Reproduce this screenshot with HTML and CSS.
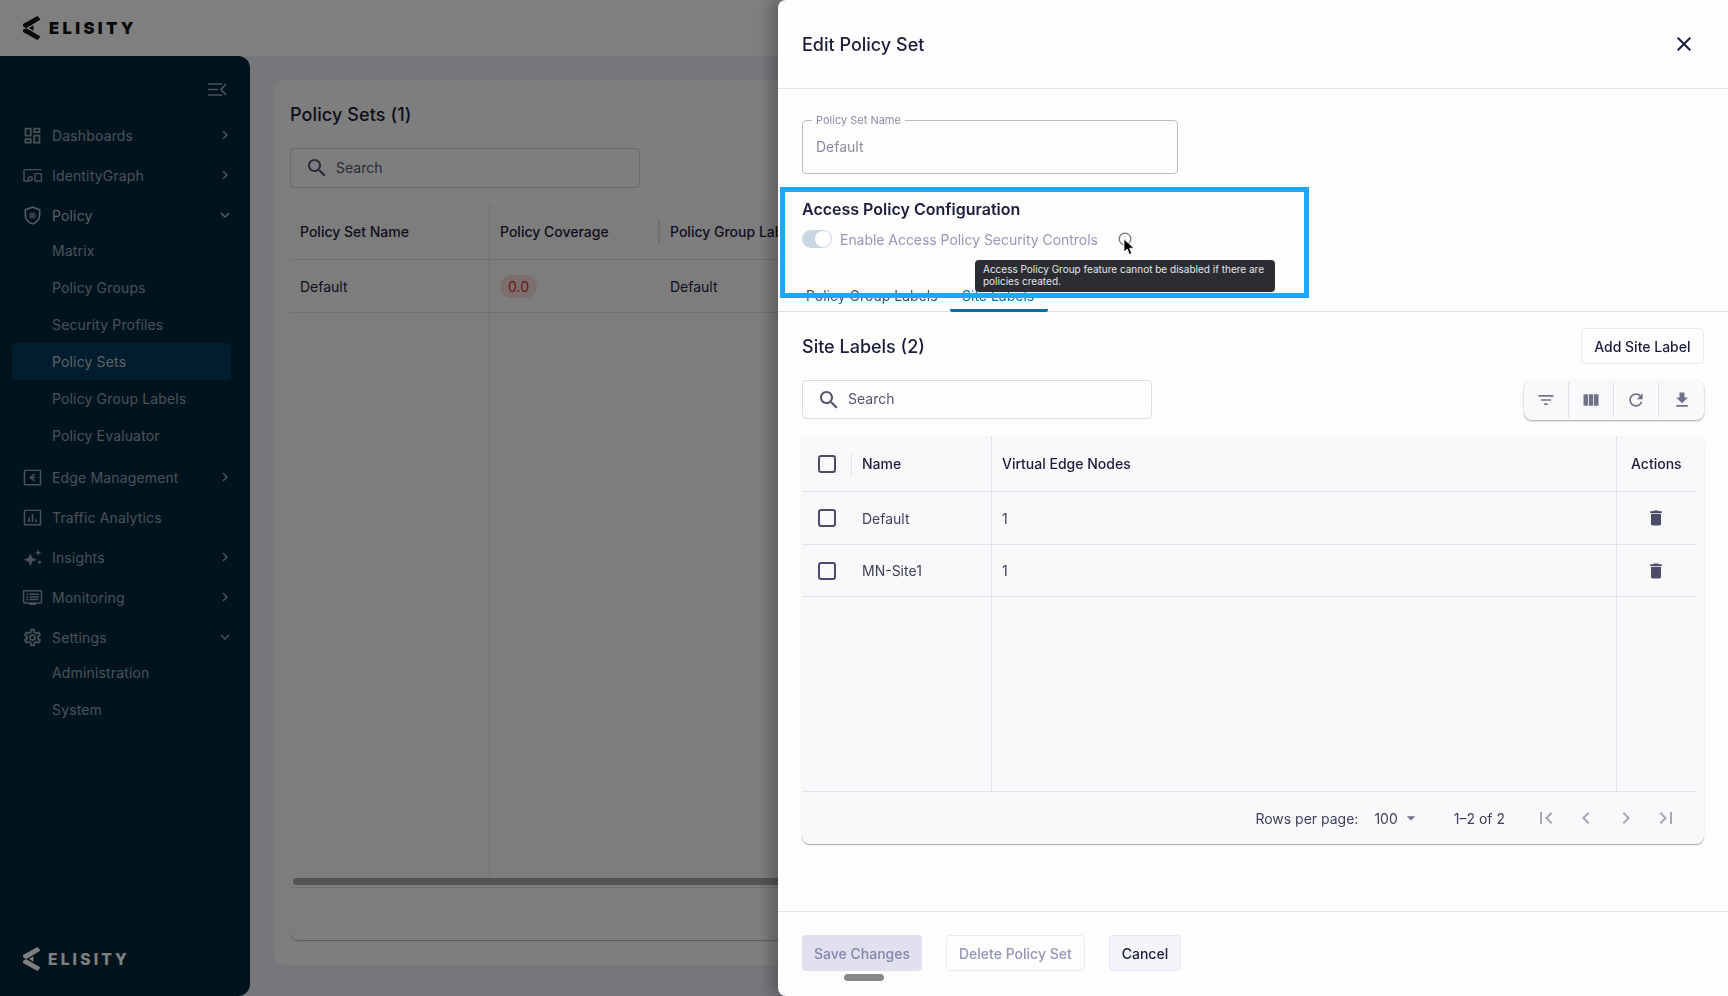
FILE: index.html
```html
<!DOCTYPE html>
<html lang="en">
<head>
    <meta charset="UTF-8">
    <title>Edit Policy Set</title>
    <link rel="stylesheet" href="styles.css">
</head>
<body>
    <svg class="sprite" xmlns="http://www.w3.org/2000/svg">
        <symbol id="i-search" viewBox="0 0 24 24"><path d="M15.5 14h-.79l-.28-.27C15.41 12.59 16 11.11 16 9.5 16 5.91 13.09 3 9.5 3S3 5.91 3 9.5 5.91 16 9.5 16c1.61 0 3.09-.59 4.23-1.57l.27.28v.79l5 4.99L20.49 19l-4.99-5zm-6 0C7.01 14 5 11.99 5 9.5S7.01 5 9.5 5 14 7.01 14 9.5 11.99 14 9.5 14z"/></symbol>
        <symbol id="i-close" viewBox="0 0 24 24"><path d="M19 6.41 17.59 5 12 10.59 6.41 5 5 6.41 10.59 12 5 17.59 6.41 19 12 13.41 17.59 19 19 17.59 13.41 12z"/></symbol>
        <symbol id="i-filter" viewBox="0 0 24 24"><path d="M10 18h4v-2h-4v2zM3 6v2h18V6H3zm3 7h12v-2H6v2z"/></symbol>
        <symbol id="i-columns" viewBox="0 0 24 24"><path d="M14.67 5v14H9.33V5h5.34zm1 14H21V5h-5.33v14zm-7.34 0V5H3v14h5.33z"/></symbol>
        <symbol id="i-refresh" viewBox="0 0 24 24"><path d="M17.65 6.35C16.2 4.9 14.21 4 12 4c-4.42 0-7.99 3.58-7.99 8s3.57 8 7.99 8c3.73 0 6.84-2.55 7.73-6h-2.08c-.82 2.33-3.04 4-5.65 4-3.31 0-6-2.69-6-6s2.69-6 6-6c1.66 0 3.14.69 4.22 1.78L13 11h7V4l-2.35 2.35z"/></symbol>
        <symbol id="i-download" viewBox="0 0 24 24"><path d="M19 9h-4V3H9v6H5l7 7 7-7zM5 18v2h14v-2H5z"/></symbol>
        <symbol id="i-delete" viewBox="0 0 24 24"><path d="M6 19c0 1.1.9 2 2 2h8c1.1 0 2-.9 2-2V7H6v12zM19 4h-3.5l-1-1h-5l-1 1H5v2h14V4z"/></symbol>
        <symbol id="i-first" viewBox="0 0 24 24"><path d="M18.41 16.59 13.82 12l4.59-4.59L17 6l-6 6 6 6zM6 6h2v12H6z"/></symbol>
        <symbol id="i-prev" viewBox="0 0 24 24"><path d="M15.41 7.41 14 6l-6 6 6 6 1.41-1.41L10.83 12z"/></symbol>
        <symbol id="i-next" viewBox="0 0 24 24"><path d="M10 6 8.59 7.41 13.17 12l-4.58 4.59L10 18l6-6z"/></symbol>
        <symbol id="i-last" viewBox="0 0 24 24"><path d="M5.59 7.41 10.18 12l-4.59 4.59L7 18l6-6-6-6zM16 6h2v12h-2z"/></symbol>
        <symbol id="i-down" viewBox="0 0 24 24"><path d="M7.41 8.59 12 13.17l4.59-4.58L18 10l-6 6-6-6z"/></symbol>
        <symbol id="i-dash" viewBox="0 0 24 24"><path d="M19 5v2h-4V5h4M9 5v6H5V5h4m10 8v6h-4v-6h4M9 17v2H5v-2h4M21 3h-8v6h8V3zM11 3H3v10h8V3zm10 8h-8v10h8V11zm-10 4H3v6h8v-6z"/></symbol>
        <symbol id="i-graph" viewBox="0 0 24 24"><path d="M22.5 4.500H3.500a2 2 0 0 0-2 2v12.500h7v-1.600H3.100V6.100h19.400zM15.500 9h6a1.500 1.500 0 0 1 1.500 1.500v7a1.500 1.500 0 0 1-1.500 1.500h-6a1.500 1.500 0 0 1-1.500-1.500v-7A1.500 1.500 0 0 1 15.500 9zm.1 1.600v6.800h5.800v-6.800zM9.500 12.500a3 3 0 1 1 0 6 3 3 0 0 1 0-6zm0 1.600a1.400 1.400 0 1 0 0 2.800 1.400 1.400 0 0 0 0-2.800z"/></symbol>
        <symbol id="i-shield" viewBox="0 0 24 24"><path d="M12 1.500 3 4.800v6.700c0 5.200 3.700 9.700 9 11 5.300-1.300 9-5.800 9-11V4.800zm7.300 10c0 4.300-3 8.100-7.300 9.300-4.300-1.200-7.300-5-7.300-9.300V6l7.300-2.700L19.300 6z"/><circle cx="12" cy="12" r="3.800" opacity=".55"/></symbol>
        <symbol id="i-edge" viewBox="0 0 24 24"><path d="M3 3h18a1 1 0 0 1 1 1v16a1 1 0 0 1-1 1H3a1 1 0 0 1-1-1V4a1 1 0 0 1 1-1zm.7 1.700v14.600h16.600V4.700z"/><path d="m14 7.500 1 1.400-3.500 2.100H15v1.900h-3.500l3.500 2.200-1 1.400-6-4.400z"/></symbol>
        <symbol id="i-chart" viewBox="0 0 24 24"><path d="M3 3h18a1 1 0 0 1 1 1v16a1 1 0 0 1-1 1H3a1 1 0 0 1-1-1V4a1 1 0 0 1 1-1zm.7 1.700v14.600h16.600V4.700zM7 12h1.900v5H7zm4-4h1.900v9H11zm4 6h1.900v3H15z"/></symbol>
        <symbol id="i-insights" viewBox="0 0 24 24"><path d="m9.500 7 2.200 5.300L17 14.500l-5.300 2.200L9.500 22l-2.200-5.300L2 14.500l5.300-2.200zM18.500 3l1.100 2.400L22 6.500l-2.400 1.100L18.500 10l-1.100-2.400L15 6.500l2.400-1.100z"/><circle cx="20" cy="17.500" r="1.700"/></symbol>
        <symbol id="i-monitor" viewBox="0 0 24 24"><path d="M2.500 3.500h19A1.500 1.500 0 0 1 23 5v12.500a1.500 1.500 0 0 1-1.500 1.500H16v1.500H8V19H2.500A1.500 1.500 0 0 1 1 17.500V5a1.500 1.500 0 0 1 1.500-1.500zm.1 1.500v12.400h18.800V5zM5 7.500h2v1.700H5zm3.500 0H19v1.700H8.500zM5 10.500h2v1.700H5zm3.500 0H19v1.700H8.500zM5 13.500h2v1.700H5zm3.500 0H19v1.700H8.500z"/></symbol>
        <symbol id="i-gear" viewBox="0 0 24 24"><path d="M19.430 12.980c.04-.32.07-.64.07-.98 0-.34-.03-.66-.07-.98l2.110-1.650c.19-.15.24-.42.12-.64l-2-3.460c-.09-.16-.26-.25-.44-.25-.06 0-.12.01-.17.03l-2.490 1c-.52-.4-1.080-.73-1.690-.98l-.38-2.650C14.460 2.180 14.250 2 14 2h-4c-.25 0-.46.18-.49.42l-.38 2.650c-.61.25-1.170.59-1.690.98l-2.490-1c-.06-.02-.12-.03-.18-.03-.17 0-.34.09-.43.25l-2 3.460c-.13.22-.07.49.12.64l2.110 1.650c-.04.32-.07.65-.07.98 0 .33.03.66.07.98l-2.110 1.650c-.19.15-.24.42-.12.64l2 3.460c.09.16.26.25.44.25.06 0 .12-.01.17-.03l2.490-1c.52.4 1.080.73 1.690.98l.38 2.650c.03.24.24.42.49.42h4c.25 0 .46-.18.49-.42l.38-2.650c.61-.25 1.170-.59 1.690-.98l2.490 1c.06.02.12.03.18.03.17 0 .34-.09.43-.25l2-3.460c.12-.22.07-.49-.12-.64l-2.110-1.650zm-1.980-1.710c.04.31.05.52.05.73 0 .21-.02.43-.05.73l-.14 1.130.89.70 1.080.84-.7 1.210-1.270-.51-1.040-.42-.9.68c-.43.32-.84.56-1.250.73l-1.060.43-.16 1.130-.2 1.350h-1.400l-.19-1.350-.16-1.130-1.060-.43c-.43-.18-.83-.41-1.230-.71l-.91-.7-1.060.43-1.270.51-.7-1.210 1.080-.84.89-.7-.14-1.130c-.03-.31-.05-.54-.05-.74s.02-.43.05-.73l.14-1.130-.89-.7-1.080-.84.7-1.210 1.270.51 1.040.42.9-.68c.43-.32.84-.56 1.250-.73l1.060-.43.16-1.130.2-1.350h1.390l.19 1.350.16 1.130 1.060.43c.43.18.83.41 1.230.71l.91.7 1.060-.43 1.270-.51.7 1.210-1.070.85-.89.7.14 1.130zM12 8c-2.210 0-4 1.790-4 4s1.790 4 4 4 4-1.790 4-4-1.790-4-4-4zm0 6c-1.100 0-2-.9-2-2s.9-2 2-2 2 .9 2 2-.9 2-2 2z"/></symbol>
        <symbol id="i-mark" viewBox="0 0 18 24"><path d="M14.500 0 17.500 3.500 6.500 10.300 3 12.300 0 10.300V8z"/><path d="M0 13.800 3 12.300 6.500 14 17.500 20.500 14.500 24 0 16z"/><path d="M10.500 9.200v5.600L6 12z"/></symbol>
    </svg>

    <header class="topbar">
        <div class="logo">
            <svg class="logo-mark"><use href="#i-mark"/></svg>
            <span class="logo-text">ELISITY</span>
        </div>
    </header>

    <div class="app">
        <aside class="sidebar">
            <div class="collapse-row">
                <svg class="collapse-icon" viewBox="0 0 19 13">
                    <path d="M0 1h14M0 6.500h10M0 12h14M18 1l-5 5.500 5 5.500"/>
                </svg>
            </div>
            <nav class="nav">
                <div class="nav-item"><svg class="nav-icon"><use href="#i-dash"/></svg><span>Dashboards</span><svg class="nav-arrow"><use href="#i-next"/></svg></div>
                <div class="nav-item"><svg class="nav-icon"><use href="#i-graph"/></svg><span>IdentityGraph</span><svg class="nav-arrow"><use href="#i-next"/></svg></div>
                <div class="nav-item open"><svg class="nav-icon"><use href="#i-shield"/></svg><span>Policy</span><svg class="nav-arrow"><use href="#i-down"/></svg></div>
                <div class="nav-sub">
                    <div class="sub-item">Matrix</div>
                    <div class="sub-item">Policy Groups</div>
                    <div class="sub-item">Security Profiles</div>
                    <div class="sub-item active">Policy Sets</div>
                    <div class="sub-item">Policy Group Labels</div>
                    <div class="sub-item">Policy Evaluator</div>
                </div>
                <div class="nav-item"><svg class="nav-icon"><use href="#i-edge"/></svg><span>Edge Management</span><svg class="nav-arrow"><use href="#i-next"/></svg></div>
                <div class="nav-item"><svg class="nav-icon"><use href="#i-chart"/></svg><span>Traffic Analytics</span></div>
                <div class="nav-item"><svg class="nav-icon"><use href="#i-insights"/></svg><span>Insights</span><svg class="nav-arrow"><use href="#i-next"/></svg></div>
                <div class="nav-item"><svg class="nav-icon"><use href="#i-monitor"/></svg><span>Monitoring</span><svg class="nav-arrow"><use href="#i-next"/></svg></div>
                <div class="nav-item"><svg class="nav-icon"><use href="#i-gear"/></svg><span>Settings</span><svg class="nav-arrow"><use href="#i-down"/></svg></div>
                <div class="nav-sub">
                    <div class="sub-item">Administration</div>
                    <div class="sub-item">System</div>
                </div>
            </nav>
            <div class="logo logo-light">
                <svg class="logo-mark"><use href="#i-mark"/></svg>
                <span class="logo-text">ELISITY</span>
            </div>
        </aside>

        <main class="content">
            <section class="card">
                <h2 class="page-title">Policy Sets (1)</h2>
                <div class="search search-page">
                    <svg><use href="#i-search"/></svg>
                    <span>Search</span>
                </div>
                <div class="bg-table">
                    <div class="bg-head">
                        <div class="bg-col1">Policy Set Name</div>
                        <div class="bg-col2">Policy Coverage</div>
                        <div class="bg-col3">Policy Group Labels</div>
                    </div>
                    <div class="bg-row">
                        <div class="bg-col1">Default</div>
                        <div class="bg-col2"><span class="chip">0.0</span></div>
                        <div class="bg-col3">Default</div>
                    </div>
                    <div class="bg-fill"><div class="bg-col1"></div></div>
                    <div class="bg-scroll"><div class="bg-thumb"></div></div>
                </div>
            </section>
        </main>
    </div>

    <div class="backdrop"></div>

    <aside class="drawer">
        <div class="drawer-head">
            <h2>Edit Policy Set</h2>
            <svg class="close-icon"><use href="#i-close"/></svg>
        </div>

        <div class="drawer-body">
            <fieldset class="name-field">
                <legend>Policy Set Name</legend>
                <span>Default</span>
            </fieldset>

            <h3 class="config-title">Access Policy Configuration</h3>
            <div class="config-row">
                <span class="toggle"><span class="toggle-knob"></span></span>
                <span class="config-label">Enable Access Policy Security Controls</span>
                <svg class="info-icon" viewBox="0 0 14 14"><circle cx="7" cy="7" r="5.800"/><path class="info-dot" d="M7 4v1.200M7 6.500v3.500"/></svg>
            </div>

            <div class="tabs">
                <div class="tab">Policy Group Labels</div>
                <div class="tab tab-active">Site Labels</div>
            </div>

            <div class="highlight"></div>
            <div class="tooltip">Access Policy Group feature cannot be disabled if there are policies created.</div>
            <svg class="cursor" viewBox="0 0 12 18"><path d="M1 1v13l3.200-3 2.200 5.500 2.400-1-2.200-5.300H11z"/></svg>

            <div class="labels-head">
                <h3>Site Labels (2)</h3>
                <button class="btn btn-add">Add Site Label</button>
            </div>

            <div class="tools-row">
                <div class="search search-drawer">
                    <svg><use href="#i-search"/></svg>
                    <span>Search</span>
                </div>
                <div class="toolbar">
                    <div class="tool"><svg><use href="#i-filter"/></svg></div>
                    <div class="tool"><svg><use href="#i-columns"/></svg></div>
                    <div class="tool"><svg><use href="#i-refresh"/></svg></div>
                    <div class="tool"><svg><use href="#i-download"/></svg></div>
                </div>
            </div>

            <div class="grid">
                <div class="grid-row grid-head">
                    <div class="c-check"><span class="checkbox"></span><span class="head-sep"></span></div>
                    <div class="c-name">Name</div>
                    <div class="c-nodes">Virtual Edge Nodes</div>
                    <div class="c-actions">Actions</div>
                </div>
                <div class="grid-row row-one">
                    <div class="c-check"><span class="checkbox"></span></div>
                    <div class="c-name">Default</div>
                    <div class="c-nodes">1</div>
                    <div class="c-actions"><svg class="trash"><use href="#i-delete"/></svg></div>
                </div>
                <div class="grid-row row-two">
                    <div class="c-check"><span class="checkbox"></span></div>
                    <div class="c-name">MN-Site1</div>
                    <div class="c-nodes">1</div>
                    <div class="c-actions"><svg class="trash"><use href="#i-delete"/></svg></div>
                </div>
                <div class="grid-row grid-empty">
                    <div class="c-check"></div>
                    <div class="c-name"></div>
                    <div class="c-nodes"></div>
                    <div class="c-actions"></div>
                </div>
                <div class="pager">
                    <span>Rows per page:</span>
                    <span class="pager-size">100<svg viewBox="0 0 24 24"><path d="M7 10l5 5 5-5z"/></svg></span>
                    <span class="pager-count">1–2 of 2</span>
                    <svg class="pager-btn"><use href="#i-first"/></svg>
                    <svg class="pager-btn"><use href="#i-prev"/></svg>
                    <svg class="pager-btn"><use href="#i-next"/></svg>
                    <svg class="pager-btn"><use href="#i-last"/></svg>
                </div>
            </div>
        </div>

        <div class="drawer-foot">
            <button class="btn btn-save">Save Changes</button>
            <button class="btn btn-delete">Delete Policy Set</button>
            <button class="btn btn-cancel">Cancel</button>
            <span class="handle"></span>
        </div>
    </aside>
</body>
</html>
```

FILE: styles.css
```css
* {
    margin: 0;
    padding: 0;
    box-sizing: border-box;
    font-family: Inter, "Liberation Sans", sans-serif;
}

body {
    height: 100vh;
    overflow: hidden;
    background: #eceef5;
    color: #1c1d3a;
    font-size: 14px;
    display: flex;
    flex-direction: column;
}

svg {
    fill: currentColor;
    display: block;
}

.sprite {
    display: none;
}

/* page behind the drawer */
.topbar {
    height: 56px;
    flex-shrink: 0;
    background: #fff;
    display: flex;
    align-items: center;
    padding-left: 23px;
}

.logo {
    display: flex;
    align-items: center;
    gap: 8px;
    color: #111;
}

.logo-mark {
    width: 18px;
    height: 24px;
}

.logo-text {
    font-size: 16.5px;
    font-weight: 900;
    letter-spacing: 3.4px;
}

.logo-light {
    position: absolute;
    left: 23px;
    bottom: 25px;
    color: #fff;
    gap: 7px;
}

.logo-light .logo-text {
    font-size: 15.5px;
    font-weight: 800;
    letter-spacing: 3.2px;
}

.app {
    flex: 1;
    display: flex;
    min-height: 0;
}

.sidebar {
    width: 250px;
    flex-shrink: 0;
    position: relative;
    background: #02283d;
    border-radius: 0 12px 12px 0;
    color: #94a3ad;
}

.collapse-row {
    height: 59px;
    display: flex;
    align-items: center;
    justify-content: flex-end;
    padding-right: 23px;
}

.collapse-icon {
    width: 19px;
    height: 13px;
    margin-top: 8px;
    fill: none;
    stroke: currentColor;
    stroke-width: 1.7;
}

.nav {
    letter-spacing: 0.15px;
}

.nav-item {
    height: 40px;
    display: flex;
    align-items: center;
    padding-left: 21.5px;
    padding-right: 16px;
}

.nav-item span {
    flex: 1;
}

.nav-icon {
    width: 21px;
    height: 21px;
    margin-right: 9.5px;
}

.nav-arrow {
    width: 18px;
    height: 18px;
}

.nav-item.open {
    color: #b2bfc7;
}

.nav-sub {
    margin: -3.5px 0 3.5px;
}

.sub-item {
    height: 37px;
    display: flex;
    align-items: center;
    padding-left: 52px;
    font-size: 14px;
}

.sub-item.active {
    margin: 0 19px 0 12px;
    padding-left: 40px;
    background: #053b5b;
    border-radius: 4px;
    color: #b8c6cf;
}

.content {
    flex: 1;
    min-width: 0;
    padding: 24px 0 31px 24px;
}

.card {
    height: 100%;
    background: #fdfdfd;
    border-radius: 10px;
    padding: 25px 16px 25px 16px;
    display: flex;
    flex-direction: column;
}

.page-title {
    font-size: 18px;
    font-weight: 500;
    line-height: 20px;
    margin-bottom: 23px;
    letter-spacing: 0.1px;
}

.search {
    display: flex;
    align-items: center;
    border: 1px solid #d3d6e6;
    border-radius: 4px;
    color: #52546e;
}

.search svg {
    width: 24px;
    height: 24px;
    margin-right: 7px;
}

.search span {
    padding-bottom: 2px;
}

.search-page {
    width: 350px;
    height: 40px;
    padding-left: 14px;
    flex-shrink: 0;
}

.bg-table {
    margin-top: 16px;
    flex: 1;
    width: 900px;
    display: flex;
    flex-direction: column;
    border-radius: 8px;
    box-shadow: 0 1px 1px rgba(0, 0, 0, 0.3);
    background: #fbfbfd;
}

.bg-head,
.bg-row {
    display: flex;
    align-items: stretch;
    border-bottom: 1px solid #dfe0e6;
    flex-shrink: 0;
}

.bg-head {
    height: 56px;
    font-weight: 500;
}

.bg-row {
    height: 53px;
}

.bg-col1,
.bg-col2,
.bg-col3 {
    display: flex;
    align-items: center;
    padding-left: 10px;
}

.bg-col1 {
    width: 200px;
    border-right: 1px solid #dfe0e6;
}

.bg-col2 {
    width: 170px;
    position: relative;
}

.bg-head .bg-col2 {
    border-right: 2px solid transparent;
    border-image: linear-gradient(transparent 30%, #dfe0e6 30%, #dfe0e6 70%, transparent 70%) 1;
}

.chip {
    background: #fbdcdc;
    color: #d32f3a;
    border-radius: 12px;
    padding: 3px 8px;
    line-height: 17px;
}

.bg-fill {
    flex: 1;
    display: flex;
}

.bg-scroll {
    height: 12px;
    padding: 2px 3px;
    border-bottom: 1px solid #dfe0e6;
}

.bg-thumb {
    height: 7px;
    border-radius: 4px;
    background: #a8a8a8;
}

.bg-table::after {
    content: "";
    height: 52px;
}

.backdrop {
    position: fixed;
    inset: 0;
    background: rgba(0, 0, 0, 0.5);
}

/* edit drawer */
.drawer {
    position: fixed;
    top: 0;
    right: 0;
    bottom: 0;
    width: 950px;
    background: #fdfdfe;
    box-shadow: -8px 0 14px rgba(0, 0, 0, 0.25);
    display: flex;
    flex-direction: column;
    border-radius: 8px 0 0 8px;
}

.drawer-head {
    height: 89px;
    flex-shrink: 0;
    padding: 0 24px;
    display: flex;
    align-items: center;
    justify-content: space-between;
    border-bottom: 1px solid #e3e4ea;
}

.drawer-head h2 {
    font-size: 18px;
    font-weight: 500;
}

.close-icon {
    width: 24px;
    height: 24px;
    margin-right: 8px;
}

.drawer-body {
    flex: 1;
    position: relative;
    padding: 24px 24px 0;
}

.name-field {
    width: 376px;
    height: 61px;
    border: 1px solid #b9bbc6;
    border-radius: 4px;
    padding: 0 13px;
    color: #8c8ea0;
}

.name-field legend {
    font-size: 11px;
    padding: 0 4px;
    margin-left: -4px;
    line-height: 14px;
    color: #8c8ea0;
}

.name-field span {
    display: block;
    line-height: 18px;
    margin-top: 11px;
}

.config-title {
    font-size: 16px;
    font-weight: 600;
    line-height: 20px;
    margin-top: 25px;
}

.config-row {
    display: flex;
    align-items: center;
    height: 20px;
    margin-top: 10px;
    color: #9698b8;
}

.toggle {
    width: 30px;
    height: 18px;
    border-radius: 9px;
    background: #c9d6e4;
    position: relative;
    margin-right: 8px;
}

.toggle-knob {
    position: absolute;
    right: 1px;
    top: 1px;
    width: 16px;
    height: 16px;
    border-radius: 50%;
    background: #fff;
}

.config-label {
    letter-spacing: -0.04px;
}

.info-icon {
    width: 14px;
    height: 14px;
    margin-left: 20px;
    color: #777;
    fill: none;
    stroke: currentColor;
    stroke-width: 1.3;
}

.info-dot {
    stroke: #bbb;
    stroke-width: 1;
}

.tabs {
    display: flex;
    height: 41px;
    margin: 22px -24px 0;
    padding-left: 24px;
    border-bottom: 1px solid #dfe0e6;
}

.tab {
    padding: 16px 4px 0;
    margin-right: 8.5px;
    color: #4a4c68;
    height: 41px;
}

.tab-active {
    width: 98px;
    padding-left: 12px;
    color: #0b6ea8;
    border-bottom: 3px solid #0b6ea8;
    border-radius: 0 0 2px 2px;
    margin-left: 0;
}

.highlight {
    position: absolute;
    left: 2px;
    top: 98px;
    width: 529px;
    height: 111px;
    border: 5px solid #1ea7f5;
}

.tooltip {
    position: absolute;
    left: 197px;
    top: 171px;
    width: 300px;
    height: 32px;
    padding: 3px 8px;
    background: #2b2d33;
    color: #e6e6e8;
    font-size: 10px;
    line-height: 12px;
    border-radius: 4px;
}

.cursor {
    position: absolute;
    left: 345px;
    top: 149px;
    width: 12px;
    height: 18px;
    fill: #000;
    stroke: #fff;
    stroke-width: 0.8;
}

.labels-head {
    display: flex;
    align-items: center;
    justify-content: space-between;
    height: 36px;
    margin-top: 16px;
}

.labels-head h3 {
    font-size: 18px;
    font-weight: 500;
}

.btn {
    font-size: 14px;
    font-weight: 500;
    color: #1c1d3a;
    height: 36px;
    padding: 0 12px;
    background: #fdfdfe;
    border: 1px solid #e8e9f3;
    border-radius: 4px;
}

.btn-add {
    padding: 0 12.5px;
}

.tools-row {
    display: flex;
    align-items: center;
    justify-content: space-between;
    margin-top: 16px;
    height: 40px;
}

.search-drawer {
    width: 350px;
    height: 39px;
    padding-left: 14px;
    border-color: #dcdde8;
    align-self: flex-start;
}

.toolbar {
    display: flex;
    height: 40px;
    align-items: center;
    background: #f9f9fc;
    border-radius: 8px;
    box-shadow: 0 1px 2px rgba(0, 0, 0, 0.35);
}

.tool {
    width: 45px;
    height: 36px;
    display: flex;
    align-items: center;
    justify-content: center;
    border-right: 1px solid #dfe0e8;
    color: #6e7187;
}

.tool:last-child {
    border-right: none;
}

.tool svg {
    width: 20px;
    height: 20px;
}

.grid {
    margin-top: 16px;
    height: 408px;
    display: flex;
    flex-direction: column;
    background: #f9f9fc;
    border-radius: 8px;
    box-shadow: 0 1px 1px rgba(0, 0, 0, 0.35);
    padding-right: 8px;
}

.grid-row {
    display: flex;
    flex-shrink: 0;
    color: #3f415c;
    border-bottom: 1px solid #e3e4ea;
}

.grid-head {
    height: 56px;
    font-weight: 500;
    color: #1c1d3a;
}

.row-one {
    height: 53px;
}

.row-two {
    height: 52px;
}

.grid-empty {
    flex: 1;
    flex-shrink: 1;
}

.grid-row > div {
    display: flex;
    align-items: center;
}

.c-check {
    width: 50px;
    padding-left: 16px;
    position: relative;
}

.checkbox {
    width: 18px;
    height: 18px;
    border: 2px solid #4a4c68;
    border-radius: 3px;
}

.head-sep {
    position: absolute;
    right: 0;
    top: 17px;
    width: 1px;
    height: 24px;
    background: #e3e4ea;
}

.c-name {
    width: 140px;
    padding-left: 10px;
    border-right: 1px solid #e3e4ea;
}

.c-nodes {
    flex: 1;
    padding-left: 10px;
    border-right: 1px solid #e3e4ea;
}

.c-actions {
    width: 79px;
    padding-left: 14px;
}

.trash {
    width: 20px;
    height: 20px;
    margin-left: 15px;
    color: #4a4c68;
}

.pager {
    height: 52px;
    flex-shrink: 0;
    display: flex;
    align-items: center;
    justify-content: flex-end;
    color: #3f415c;
    padding-right: 18px;
}

.pager-size {
    display: flex;
    align-items: center;
    margin-left: 16px;
    margin-right: 33px;
}

.pager-size svg {
    width: 20px;
    height: 20px;
    margin-left: 3px;
    color: #6e7187;
}

.pager-count {
    margin-right: 13px;
}

.pager-btn {
    width: 24px;
    height: 24px;
    margin-left: 16px;
    color: #a5a7b5;
}

.drawer-foot {
    height: 85px;
    flex-shrink: 0;
    position: relative;
    border-top: 1px solid #e3e4ea;
    display: flex;
    align-items: center;
    padding: 0 24px 2px;
}

.btn-save {
    background: #e0e0ee;
    border-color: #e0e0ee;
    color: #8486ac;
    margin-right: 24px;
    padding: 0 11px;
}

.btn-delete {
    color: #9496b8;
    margin-right: 24px;
}

.btn-cancel {
    background: #f4f5fa;
    border-color: #e4e6f2;
}

.handle {
    position: absolute;
    left: 66px;
    bottom: 15px;
    width: 40px;
    height: 7px;
    border-radius: 4px;
    background: #888;
}
```
